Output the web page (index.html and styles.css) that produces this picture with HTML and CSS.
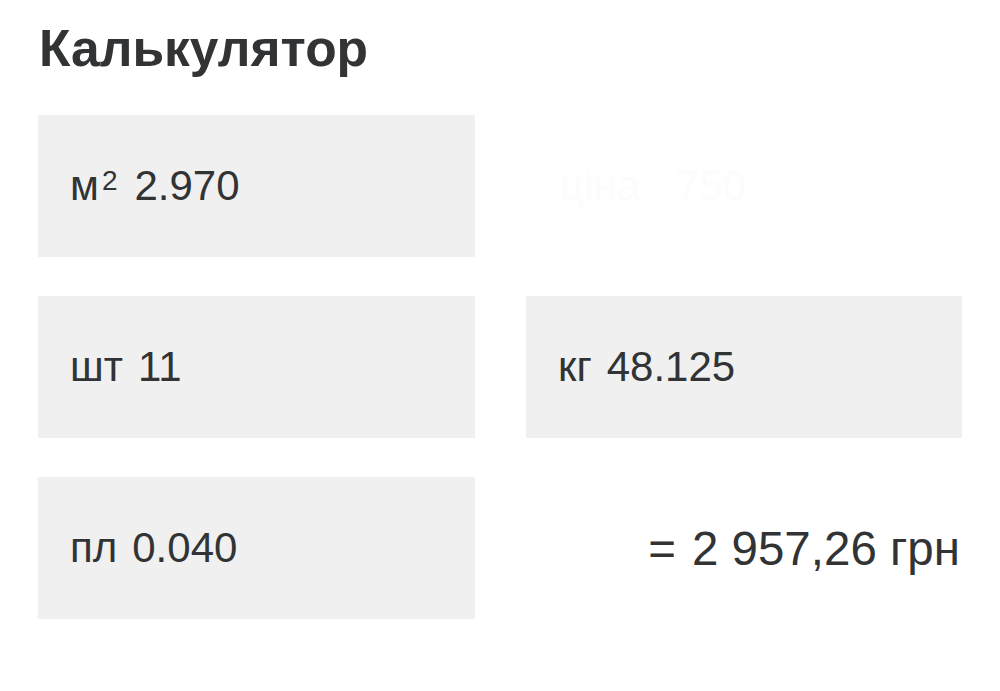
FILE: index.html
```html
<!DOCTYPE html>
<html lang="uk">
<head>
    <meta charset="UTF-8">
    <meta name="viewport" content="width=device-width, initial-scale=1.0">
    <title>Калькулятор</title>
    <link rel="stylesheet" href="styles.css">
</head>
<body>
    <div class="calc">
        <h1 class="calc-title">Калькулятор</h1>
        <div class="calc-grid">
            <div class="field">
                <span class="unit">м<sup>2</sup></span>
                <span class="value">2.970</span>
            </div>
            <div class="ghost">
                <span class="unit">ціна</span>
                <span class="value">750</span>
            </div>
            <div class="field">
                <span class="unit">шт</span>
                <span class="value">11</span>
            </div>
            <div class="field">
                <span class="unit">кг</span>
                <span class="value">48.125</span>
            </div>
            <div class="field">
                <span class="unit">пл</span>
                <span class="value">0.040</span>
            </div>
            <div class="total">
                <span class="eq">=</span>
                <span class="sum">2 957,26 грн</span>
            </div>
        </div>
    </div>
</body>
</html>
```

FILE: styles.css
```css
*{
    margin: 0;
    padding: 0;
}
body{
    background-color: #fff;
    color: #313335;
    font-family: "Liberation Sans", Arial, sans-serif;
}
.calc{
    padding: 19px 38px 0 38px;
}
.calc-title{
    font-size: 51.5px;
    line-height: 58px;
    font-weight: bold;
    margin-left: 1px;
    margin-bottom: 38px;
}
.calc-grid{
    display: grid;
    grid-template-columns: 437px 436px;
    grid-auto-rows: 142px;
    column-gap: 51px;
    row-gap: 39px;
}
.field,
.ghost{
    display: flex;
    align-items: center;
    padding-left: 32px;
    font-size: 42px;
}
.field{
    background-color: #f0f0f0;
}
.ghost{
    color: #fcfcfc;
    padding-left: 34px;
}
.ghost .unit{
    margin-right: 36px;
}
.unit{
    margin-right: 15px;
}
.unit sup{
    font-size: 28px;
    vertical-align: 10px;
    line-height: 0;
    margin-left: 3px;
    margin-right: 2px;
}
.total{
    display: flex;
    align-items: center;
    justify-content: flex-end;
    font-size: 47.5px;
    padding-right: 2px;
}
.eq{
    margin-right: 16px;
}
```
